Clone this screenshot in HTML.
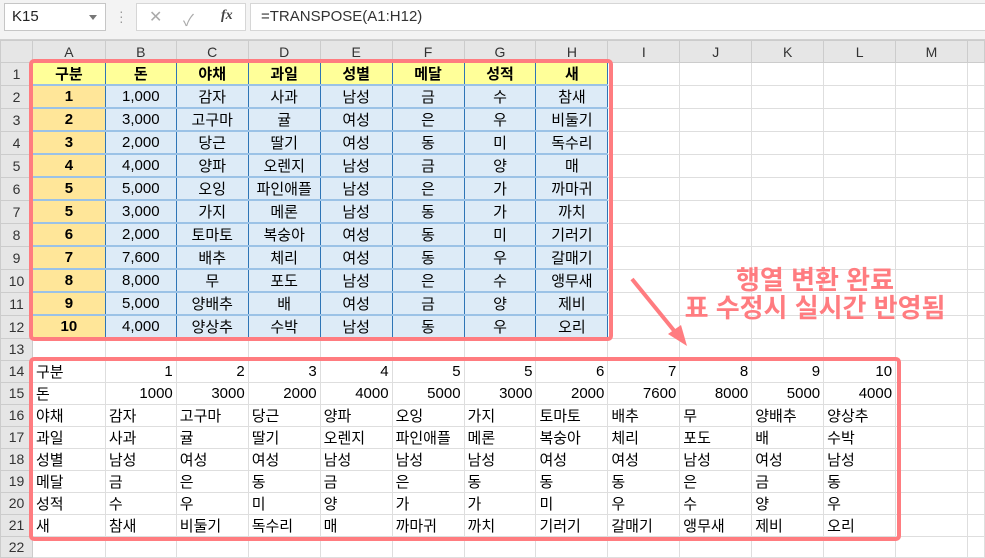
<!DOCTYPE html>
<html><head><meta charset="utf-8"><style>
*{margin:0;padding:0;box-sizing:border-box}
body{width:985px;height:554px;overflow:hidden;background:#fff;font-family:"Liberation Sans","Noto Sans CJK KR",sans-serif;position:relative}
.top{position:absolute;left:0;top:0;width:985px;height:40px;background:#f3f3f3;border-bottom:1px solid #d0d0d0}
.nb{position:absolute;left:4px;top:3px;width:102px;height:28px;background:#fff;border:1px solid #c6c6c6;font-size:15px;line-height:26px;padding-left:7px;color:#222}
.nb:after{content:"";position:absolute;right:8px;top:11px;border:4px solid transparent;border-top:5px solid #777}
.dots{position:absolute;left:119px;top:9px;color:#999;font-size:14px;line-height:5px;width:4px}
.fx{position:absolute;left:136px;top:3px;width:110px;height:28px;background:#fff;border:1px solid #d6d6d6;color:#aaa}
.fm{position:absolute;left:250px;top:3px;width:740px;height:28px;background:#fff;border:1px solid #d6d6d6;font-size:15px;line-height:26px;padding-left:10px;color:#333}
table{position:absolute;left:0;top:40px;border-collapse:collapse;table-layout:fixed;font-size:15px}
td{border:1px solid #dedede;height:22.8px;white-space:nowrap;overflow:hidden;padding:0 3px;color:#000}
tr.h td{background:#e6e6e6;text-align:center;color:#333;height:22px;border-color:#ccc;font-size:14px}
td.r{background:#e6e6e6;text-align:center;color:#333;border-color:#ccc;font-size:14px;padding:0}
tr.b td{height:21.8px}
.y{background:#ffff99;font-weight:bold;text-align:center;border-left:1px solid #2e75b6;border-right:1px solid #2e75b6;border-bottom:2px solid #9bc2e6}
.o{background:#ffe699;font-weight:bold;text-align:center;border-left:1px solid #2e75b6;border-right:1px solid #2e75b6;border-bottom:2px solid #9bc2e6;border-top:2px solid #9bc2e6}
.c{background:#ddebf7;text-align:center;border-left:1px solid #2e75b6;border-right:1px solid #2e75b6;border-bottom:2px solid #9bc2e6;border-top:2px solid #9bc2e6}
.n{text-align:right}
.box{position:absolute;border:4px solid #ff7c80;border-radius:5px}
.note{position:absolute;left:640px;top:266px;width:350px;text-align:center;color:#ff7c80;font-weight:bold;font-size:26px;line-height:28px;font-family:"Liberation Sans","Noto Sans CJK KR",sans-serif;white-space:nowrap}
</style></head><body>
<div class="top">
<div class="nb">K15</div>
<div class="dots">·<br>·<br>·</div>
<div class="fx"><span style="position:absolute;left:12px;top:3px;font-size:16px">✕</span><span style="position:absolute;left:46px;top:3px;font-size:16px">✓</span><span style="position:absolute;left:84px;top:4px;font-size:14px;font-style:italic;font-family:'Liberation Serif',serif;color:#444;font-weight:bold">fx</span></div>
<div class="fm">=TRANSPOSE(A1:H12)</div>
</div>
<table>
<colgroup><col style="width:32px"><col style="width:73px"><col style="width:71px"><col style="width:72px"><col style="width:72px"><col style="width:72px"><col style="width:72px"><col style="width:72px"><col style="width:72px"><col style="width:72px"><col style="width:72px"><col style="width:72px"><col style="width:72px"><col style="width:72px"><col style="width:17px"></colgroup>
<tr class="h"><td></td><td>A</td><td>B</td><td>C</td><td>D</td><td>E</td><td>F</td><td>G</td><td>H</td><td>I</td><td>J</td><td>K</td><td>L</td><td>M</td><td></td></tr>
<tr><td class="r">1</td><td class="y">구분</td><td class="y">돈</td><td class="y">야채</td><td class="y">과일</td><td class="y">성별</td><td class="y">메달</td><td class="y">성적</td><td class="y">새</td><td></td><td></td><td></td><td></td><td></td><td></td></tr>
<tr><td class="r">2</td><td class="o">1</td><td class="c">1,000</td><td class="c">감자</td><td class="c">사과</td><td class="c">남성</td><td class="c">금</td><td class="c">수</td><td class="c">참새</td><td></td><td></td><td></td><td></td><td></td><td></td></tr>
<tr><td class="r">3</td><td class="o">2</td><td class="c">3,000</td><td class="c">고구마</td><td class="c">귤</td><td class="c">여성</td><td class="c">은</td><td class="c">우</td><td class="c">비둘기</td><td></td><td></td><td></td><td></td><td></td><td></td></tr>
<tr><td class="r">4</td><td class="o">3</td><td class="c">2,000</td><td class="c">당근</td><td class="c">딸기</td><td class="c">여성</td><td class="c">동</td><td class="c">미</td><td class="c">독수리</td><td></td><td></td><td></td><td></td><td></td><td></td></tr>
<tr><td class="r">5</td><td class="o">4</td><td class="c">4,000</td><td class="c">양파</td><td class="c">오렌지</td><td class="c">남성</td><td class="c">금</td><td class="c">양</td><td class="c">매</td><td></td><td></td><td></td><td></td><td></td><td></td></tr>
<tr><td class="r">6</td><td class="o">5</td><td class="c">5,000</td><td class="c">오잉</td><td class="c">파인애플</td><td class="c">남성</td><td class="c">은</td><td class="c">가</td><td class="c">까마귀</td><td></td><td></td><td></td><td></td><td></td><td></td></tr>
<tr><td class="r">7</td><td class="o">5</td><td class="c">3,000</td><td class="c">가지</td><td class="c">메론</td><td class="c">남성</td><td class="c">동</td><td class="c">가</td><td class="c">까치</td><td></td><td></td><td></td><td></td><td></td><td></td></tr>
<tr><td class="r">8</td><td class="o">6</td><td class="c">2,000</td><td class="c">토마토</td><td class="c">복숭아</td><td class="c">여성</td><td class="c">동</td><td class="c">미</td><td class="c">기러기</td><td></td><td></td><td></td><td></td><td></td><td></td></tr>
<tr><td class="r">9</td><td class="o">7</td><td class="c">7,600</td><td class="c">배추</td><td class="c">체리</td><td class="c">여성</td><td class="c">동</td><td class="c">우</td><td class="c">갈매기</td><td></td><td></td><td></td><td></td><td></td><td></td></tr>
<tr><td class="r">10</td><td class="o">8</td><td class="c">8,000</td><td class="c">무</td><td class="c">포도</td><td class="c">남성</td><td class="c">은</td><td class="c">수</td><td class="c">앵무새</td><td></td><td></td><td></td><td></td><td></td><td></td></tr>
<tr><td class="r">11</td><td class="o">9</td><td class="c">5,000</td><td class="c">양배추</td><td class="c">배</td><td class="c">여성</td><td class="c">금</td><td class="c">양</td><td class="c">제비</td><td></td><td></td><td></td><td></td><td></td><td></td></tr>
<tr><td class="r">12</td><td class="o">10</td><td class="c">4,000</td><td class="c">양상추</td><td class="c">수박</td><td class="c">남성</td><td class="c">동</td><td class="c">우</td><td class="c">오리</td><td></td><td></td><td></td><td></td><td></td><td></td></tr>
<tr class="b"><td class="r">13</td><td></td><td></td><td></td><td></td><td></td><td></td><td></td><td></td><td></td><td></td><td></td><td></td><td></td><td></td></tr>
<tr class="b"><td class="r">14</td><td>구분</td><td class="n">1</td><td class="n">2</td><td class="n">3</td><td class="n">4</td><td class="n">5</td><td class="n">5</td><td class="n">6</td><td class="n">7</td><td class="n">8</td><td class="n">9</td><td class="n">10</td><td></td><td></td></tr>
<tr class="b"><td class="r">15</td><td>돈</td><td class="n">1000</td><td class="n">3000</td><td class="n">2000</td><td class="n">4000</td><td class="n">5000</td><td class="n">3000</td><td class="n">2000</td><td class="n">7600</td><td class="n">8000</td><td class="n">5000</td><td class="n">4000</td><td></td><td></td></tr>
<tr class="b"><td class="r">16</td><td>야채</td><td>감자</td><td>고구마</td><td>당근</td><td>양파</td><td>오잉</td><td>가지</td><td>토마토</td><td>배추</td><td>무</td><td>양배추</td><td>양상추</td><td></td><td></td></tr>
<tr class="b"><td class="r">17</td><td>과일</td><td>사과</td><td>귤</td><td>딸기</td><td>오렌지</td><td>파인애플</td><td>메론</td><td>복숭아</td><td>체리</td><td>포도</td><td>배</td><td>수박</td><td></td><td></td></tr>
<tr class="b"><td class="r">18</td><td>성별</td><td>남성</td><td>여성</td><td>여성</td><td>남성</td><td>남성</td><td>남성</td><td>여성</td><td>여성</td><td>남성</td><td>여성</td><td>남성</td><td></td><td></td></tr>
<tr class="b"><td class="r">19</td><td>메달</td><td>금</td><td>은</td><td>동</td><td>금</td><td>은</td><td>동</td><td>동</td><td>동</td><td>은</td><td>금</td><td>동</td><td></td><td></td></tr>
<tr class="b"><td class="r">20</td><td>성적</td><td>수</td><td>우</td><td>미</td><td>양</td><td>가</td><td>가</td><td>미</td><td>우</td><td>수</td><td>양</td><td>우</td><td></td><td></td></tr>
<tr class="b"><td class="r">21</td><td>새</td><td>참새</td><td>비둘기</td><td>독수리</td><td>매</td><td>까마귀</td><td>까치</td><td>기러기</td><td>갈매기</td><td>앵무새</td><td>제비</td><td>오리</td><td></td><td></td></tr>
<tr class="b"><td class="r">22</td><td></td><td></td><td></td><td></td><td></td><td></td><td></td><td></td><td></td><td></td><td></td><td></td><td></td><td></td></tr>
</table>
<div class="box" style="left:29px;top:59px;width:584px;height:282px"></div>
<div class="box" style="left:29px;top:357px;width:872px;height:184px"></div>
<div class="note">행열 변환 완료<br>표 수정시 실시간 반영됨</div>
<svg style="position:absolute;left:0;top:0" width="985" height="554"><line x1="632" y1="279" x2="676" y2="333" stroke="#ff7c80" stroke-width="4"/><polygon points="687,346 668,334 681,325" fill="#ff7c80"/></svg>
</body></html>
